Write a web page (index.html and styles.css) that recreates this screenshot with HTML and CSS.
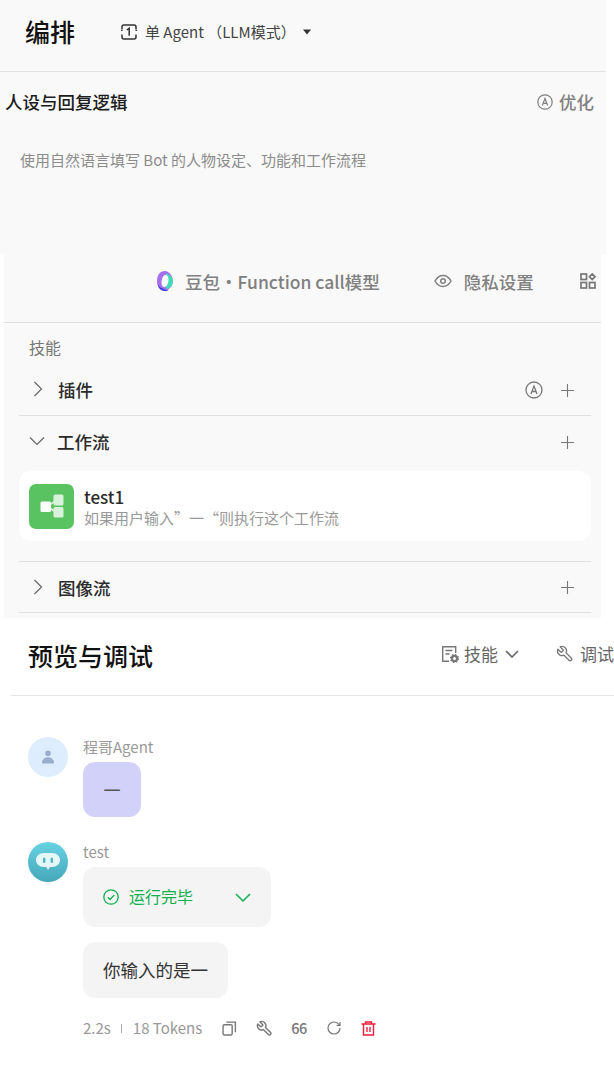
FILE: index.html
```html
<!DOCTYPE html>
<html lang="zh">
<head>
<meta charset="utf-8">
<title>编排</title>
<link rel="stylesheet" href="styles.css">
</head>
<body>
<section class="panel-top">
  <header class="arrange-head">
    <h1 class="arrange-title">编排</h1>
    <div class="mode">
      <svg class="mode-icon" viewBox="0 0 16 16" fill="none" stroke="#333" stroke-width="1.500"><path d="M1 5.500V3c0-1.100.9-2 2-2h10c1.100 0 2 .9 2 2v2.500M1 10.500V13c0 1.100.9 2 2 2h10c1.100 0 2-.9 2-2v-2.500"/><path d="M0 6.500h1.500M14.500 6.500H16" stroke-width="1"/><path d="M5.800 6 8.200 4.300v7.400"/></svg>
      <span>单 Agent （LLM模式）</span>
      <svg class="caret" viewBox="0 0 8 6"><path d="M0 .5h8L4 5.500z" fill="#333"/></svg>
    </div>
  </header>
  <div class="persona-head">
    <h2 class="persona-title">人设与回复逻辑</h2>
    <div class="optimize">
      <svg class="a-icon-sm" viewBox="0 0 16 16" fill="none" stroke="#808080" stroke-width="1.200"><circle cx="8" cy="8" r="7.200"/><path d="M5.300 11.500 8 4.500l2.700 7M6.200 9.300h3.600"/></svg>
      <span>优化</span>
    </div>
  </div>
  <p class="persona-hint">使用自然语言填写 Bot 的人物设定、功能和工作流程</p>
</section>

<section class="panel-skills">
  <div class="toolbar">
    <svg class="doubao" viewBox="0 0 20 22"><path d="M10 1c4 0 8 5.500 8 10s-4 9-8 10c-5 0-8-4-8-10S5 1 10 1z" fill="#a66ff0"/><path d="M11 3c4 2 7 5 7 8 0 4-3 7-7 8z" fill="#3fdcb8"/><path d="M2.500 14c1 4 4 7 8 7 2 0 3-1 3-1-4 0-9-2-11-6z" fill="#2a35e8"/><ellipse cx="10" cy="11" rx="3.400" ry="6.200" fill="#fff" transform="rotate(10 10 11)"/></svg>
    <span class="tool-text model">豆包·Function call模型</span>
    <svg class="eye" viewBox="0 0 18 14" fill="none" stroke="#808080" stroke-width="1.500"><path d="M1 7c2-3.600 4.800-5.500 8-5.500s6 1.900 8 5.500c-2 3.600-4.800 5.500-8 5.500S3 10.600 1 7z"/><circle cx="9" cy="7" r="2.300"/></svg>
    <span class="tool-text privacy">隐私设置</span>
    <svg class="grid-icon" viewBox="0 0 16 16" fill="none" stroke="#777" stroke-width="1.700"><rect x="1" y="1" width="5.500" height="5.500"/><rect x="1" y="9.500" width="5.500" height="5.500"/><rect x="9.500" y="9.500" width="5.500" height="5.500"/><path d="M12.200.9 15 3.700l-2.800 2.800-2.800-2.800z"/></svg>
  </div>
  <div class="skills">
    <div class="skills-label">技能</div>
    <div class="row row-plugin">
      <svg class="chev" viewBox="0 0 10 16" fill="none" stroke="#666" stroke-width="1.200"><path d="m1.500 1 7 7-7 7"/></svg>
      <span class="row-title">插件</span>
      <svg class="a-icon" viewBox="0 0 18 18" fill="none" stroke="#777" stroke-width="1.300"><circle cx="9" cy="9" r="8"/><path d="M6 13 9 5l3 8M7 10.500h4"/></svg>
      <svg class="plus" viewBox="0 0 13 13" stroke="#777" stroke-width="1.100"><path d="M6.500 0v13M0 6.500h13"/></svg>
    </div>
    <div class="row row-flow">
      <svg class="chev-down" viewBox="0 0 16 10" fill="none" stroke="#666" stroke-width="1.200"><path d="m1 1.500 7 7 7-7"/></svg>
      <span class="row-title">工作流</span>
      <svg class="plus" viewBox="0 0 13 13" stroke="#777" stroke-width="1.100"><path d="M6.500 0v13M0 6.500h13"/></svg>
    </div>
    <div class="flow-card">
      <div class="flow-logo">
        <svg viewBox="0 0 24 24" width="24" height="24"><path d="M8 12.500 16 6M8 12.500l8 6" stroke="#e6f6e7" stroke-width="1.600"/><rect x="0.500" y="7.500" width="10.500" height="10.500" rx="1.500" fill="#fff"/><rect x="13.500" y="0.500" width="10" height="11" rx="1.500" fill="#d9f2db"/><rect x="13.500" y="13" width="10" height="10.500" rx="1.500" fill="#d9f2db"/></svg>
      </div>
      <div class="flow-text">
        <div class="flow-name">test1</div>
        <div class="flow-desc">如果用户输入”一“则执行这个工作流</div>
      </div>
    </div>
    <div class="row row-image">
      <svg class="chev" viewBox="0 0 10 16" fill="none" stroke="#666" stroke-width="1.200"><path d="m1.500 1 7 7-7 7"/></svg>
      <span class="row-title">图像流</span>
      <svg class="plus" viewBox="0 0 13 13" stroke="#777" stroke-width="1.100"><path d="M6.500 0v13M0 6.500h13"/></svg>
    </div>
  </div>
</section>

<section class="panel-preview">
  <header class="preview-head">
    <h2 class="preview-title">预览与调试</h2>
    <div class="preview-tools">
      <svg class="tool-icon" viewBox="0 0 18 18" fill="none" stroke="#777" stroke-width="1.400"><path d="M8 16.300H1.700V1.700h13V8M4.500 5.500h7M4.500 9h4"/><circle cx="13.500" cy="13.500" r="2.600" fill="#fff" stroke-width="2.200"/><circle cx="13.500" cy="13.500" r="3.900" stroke-width="1.300" stroke-dasharray="1.500 1.560"/></svg>
      <span class="tool-label">技能</span>
      <svg class="tool-chev" viewBox="0 0 14 8" fill="none" stroke="#666" stroke-width="1.600"><path d="m1 1 6 6 6-6"/></svg>
      <svg class="tool-icon wrench" viewBox="0 0 24 24" fill="none" stroke="#777" stroke-width="1.800" stroke-linejoin="round"><g transform="matrix(-1 0 0 1 24 0)"><path d="M14.700 6.300a1 1 0 0 0 0 1.400l1.600 1.600a1 1 0 0 0 1.400 0l3.770-3.770a6 6 0 0 1-7.940 7.940l-6.910 6.910a2.120 2.120 0 0 1-3-3l6.910-6.910a6 6 0 0 1 7.940-7.940l-3.760 3.760z"/></g></svg>
      <span class="tool-label tool-label-debug">调试</span>
    </div>
  </header>
  <div class="chat">
    <div class="msg msg-user">
      <div class="avatar avatar-user">
        <svg viewBox="0 0 12 14" width="12" height="14"><circle cx="6" cy="3.200" r="2.800" fill="#9aafcc"/><path d="M1 13.500c-.8 0-1-.6-1-1.300C.3 9.500 2.800 7.200 6 7.200s5.700 2.300 6 5c0 .7-.2 1.300-1 1.300z" fill="#9aafcc"/></svg>
      </div>
      <div class="msg-body">
        <div class="msg-name">程哥Agent</div>
        <div class="bubble bubble-user">一</div>
      </div>
    </div>
    <div class="msg msg-bot">
      <div class="avatar avatar-bot">
        <svg viewBox="0 0 24 20" width="24" height="20"><path d="M7.500 1h9C20.500 1 24 4 24 8s-3.500 7-7.500 7H14l-2 3-1.700-3H7.500C3.500 15 0 12 0 8s3.500-7 7.500-7z" fill="#e4f6f8"/><rect x="7" y="5.500" width="2.400" height="5.500" rx="1.200" fill="#53b3c6"/><rect x="14.600" y="5.500" width="2.400" height="5.500" rx="1.200" fill="#53b3c6"/></svg>
      </div>
      <div class="msg-body">
        <div class="msg-name">test</div>
        <div class="bubble bubble-run">
          <svg class="check" viewBox="0 0 16 16" fill="none" stroke="#12b04e" stroke-width="1.300"><circle cx="8" cy="8" r="7.200"/><path d="m4.800 8.200 2.300 2.300 4.200-4.500"/></svg>
          <span class="run-text">运行完毕</span>
          <svg class="run-chev" viewBox="0 0 16 9" fill="none" stroke="#12b04e" stroke-width="1.500"><path d="m1 1 7 7 7-7"/></svg>
        </div>
        <div class="bubble bubble-answer">你输入的是一</div>
        <div class="meta">
          <span class="meta-text">2.2s</span>
          <span class="meta-sep"></span>
          <span class="meta-text">18 Tokens</span>
          <svg class="meta-icon copy" viewBox="0 0 14 14" fill="none" stroke="#777" stroke-width="1.300"><rect x="1" y="3.500" width="8.500" height="9.500" rx="1"/><path d="M4 1h8.500v9.500"/></svg>
          <svg class="meta-icon wrench-sm" viewBox="0 0 24 24" fill="none" stroke="#777" stroke-width="2" stroke-linejoin="round"><g transform="matrix(-1 0 0 1 24 0)"><path d="M14.700 6.300a1 1 0 0 0 0 1.400l1.600 1.600a1 1 0 0 0 1.400 0l3.770-3.770a6 6 0 0 1-7.940 7.940l-6.910 6.910a2.120 2.120 0 0 1-3-3l6.910-6.910a6 6 0 0 1 7.940-7.940l-3.760 3.760z"/></g></svg>
          <span class="meta-quote">66</span>
          <svg class="meta-icon refresh" viewBox="0 0 24 24" fill="none" stroke="#777" stroke-width="1.800"><path d="M21 12a9 9 0 1 1-9-9c2.520 0 4.930 1 6.740 2.740L21 8"/><path d="M21 3v5h-5"/></svg>
          <svg class="meta-icon trash" viewBox="0 0 14 15" fill="none" stroke="#f01f3d" stroke-width="1.400"><path d="M0 3h14M4 3V1h6v2M2 3v11h10V3M5.500 6v5M8.500 6v5"/></svg>
        </div>
      </div>
    </div>
  </div>
</section>
</body>
</html>
```
FILE: styles.css
```css
* { box-sizing: border-box; }
html, body { margin: 0; padding: 0; }
body {
  width: 614px;
  height: 1066px;
  overflow: hidden;
  background: #fff;
  font-family: "Noto Sans CJK SC", "Noto Sans", sans-serif;
  color: #1d1c23;
}
h1, h2, p { margin: 0; font-weight: 500; }

.panel-top { width: 606px; height: 254px; background: #f9f9f9; }
.arrange-head {
  height: 72px;
  border-bottom: 1px solid #e2e2e2;
  padding: 0 0 8px 25px;
  display: flex;
  align-items: center;
}
.arrange-title { font-size: 25px; line-height: 32px; color: #111; width: 96px; margin-top: -2px; }
.mode { display: flex; align-items: center; font-size: 15px; color: #444; }
.mode-icon { width: 16px; height: 16px; margin-right: 8px; }
.caret { width: 8px; height: 6px; margin-left: 7px; }
.persona-head {
  display: flex;
  justify-content: space-between;
  align-items: center;
  padding: 9px 12px 0 5px;
  height: 50px;
}
.persona-title { font-size: 17.500px; line-height: 24px; color: #1c1c1c; }
.optimize { display: flex; align-items: center; gap: 6px; font-size: 17.500px; font-weight: 500; color: #808080; }
.a-icon-sm { width: 16px; height: 16px; }
.persona-hint { padding: 27px 0 0 20px; font-size: 15px; line-height: 22px; font-weight: 400; color: #8c8c8c; }

.panel-skills { margin-left: 4px; width: 597px; height: 364px; background: #f9f9f9; }
.toolbar {
  height: 69px;
  border-bottom: 1px solid #e0e0e0;
  display: flex;
  align-items: center;
  padding: 0 6px 14px 151px;
}
.doubao { width: 20px; height: 22px; flex: none; }
.tool-text { font-size: 17.500px; font-weight: 500; color: #808080; white-space: nowrap; }
.model { margin-left: 10px; }
.eye { width: 18px; height: 14px; margin-left: 54px; flex: none; }
.privacy { margin-left: 12px; }
.grid-icon { width: 16px; height: 16px; margin-left: 46px; flex: none; }

.skills { padding: 0 10px 0 15px; }
.skills-label { padding: 12px 0 0 10px; font-size: 16px; line-height: 24px; color: #777; height: 41px; }
.row {
  display: flex;
  align-items: center;
  height: 51px;
  border-bottom: 1px solid #e0e0e0;
  padding: 1px 17px 0 14px;
}
.row-plugin { height: 52px; }
.row-flow { border-bottom: 0; height: 51px; }
.row-image { height: 52px; border-top: 1px solid #e0e0e0; margin-top: 20px; }
.chev { width: 10px; height: 16px; margin: 0 15px 2px 0; flex: none; }
.chev-down { width: 16px; height: 10px; margin: 0 12px 3px -4px; flex: none; }
.row-title { font-size: 17.500px; line-height: 24px; font-weight: 500; color: #2b2b2b; flex: 1; }
.a-icon { width: 18px; height: 18px; margin-right: 18px; }
.plus { width: 13px; height: 13px; }

.flow-card {
  height: 70px;
  background: #fff;
  border-radius: 12px;
  display: flex;
  align-items: center;
  padding: 0 10px;
  margin-top: 4px;
}
.flow-logo {
  width: 45px;
  height: 45px;
  border-radius: 7px;
  background: #59c361;
  display: flex;
  align-items: center;
  justify-content: center;
  flex: none;
}
.flow-text { margin-left: 10px; padding-top: 2px; }
.flow-name { font-size: 17px; line-height: 22px; font-weight: 500; color: #2a2a2a; }
.flow-desc { font-size: 15px; line-height: 20px; color: #999; }

.panel-preview { background: #fff; }
.preview-head {
  margin-left: 11px;
  height: 78px;
  border-bottom: 1px solid #e5e5e5;
  display: flex;
  align-items: center;
  padding: 0 0 2px 17px;
}
.preview-title { font-size: 25px; line-height: 34px; color: #111; white-space: nowrap; width: 413px; margin-top: -2px; }
.preview-tools { display: flex; align-items: center; white-space: nowrap; padding-bottom: 4px; }
.tool-icon { width: 18px; height: 18px; flex: none; }
.tool-label { font-size: 17px; line-height: 24px; color: #666; margin-left: 5px; }
.tool-label-debug { margin-left: 6px; }
.tool-chev { width: 14px; height: 8px; margin-left: 7px; flex: none; }
.wrench { margin-left: 37px; }

.chat { padding: 41px 0 0 28px; display: flex; flex-direction: column; gap: 25px; }
.msg { display: flex; gap: 15px; }
.avatar {
  width: 40px;
  height: 40px;
  border-radius: 50%;
  flex: none;
  display: flex;
  align-items: center;
  justify-content: center;
}
.avatar-user { background: #deedfe; }
.avatar-bot { background: linear-gradient(#66d3e2, #46a6ba); }
.msg-body { display: flex; flex-direction: column; align-items: flex-start; }
.msg-name { font-size: 15px; line-height: 20px; color: #999; height: 25px; }
.bubble { border-radius: 12px; font-size: 17px; }
.bubble-user {
  width: 58px;
  height: 55px;
  background: #d1d1fa;
  color: #555;
  display: flex;
  align-items: center;
  justify-content: center;
}
.bubble-run {
  width: 188px;
  height: 60px;
  background: #f4f4f4;
  display: flex;
  align-items: center;
  padding: 0 20px;
}
.check { width: 16px; height: 16px; flex: none; }
.run-text { font-size: 16px; line-height: 22px; color: #12b04e; margin-left: 10px; flex: 1; margin-top: -2px; }
.run-chev { width: 16px; height: 9px; flex: none; }
.bubble-answer {
  margin-top: 15px;
  height: 56px;
  width: 145px;
  padding: 0 20px;
  background: #f4f4f4;
  color: #333;
  font-size: 17.500px;
  line-height: 56px;
  white-space: nowrap;
}
.meta { margin-top: 20px; display: flex; align-items: center; height: 20px; }
.meta-text { font-size: 15px; line-height: 20px; color: #999; }
.meta-sep { width: 1px; height: 9px; background: #aaa; margin: 0 11px 0 10px; }
.meta-icon { width: 15px; height: 15px; flex: none; }
.copy { margin-left: 20px; }
.wrench-sm { width: 17px; height: 17px; margin-left: 19px; }
.meta-quote { font-size: 14.500px; line-height: 20px; color: #777; margin-left: 18px; width: 16px; font-weight: 500; letter-spacing: -0.500px; }
.refresh { width: 16px; height: 16px; margin-left: 19px; }
.trash { margin-left: 19px; }
```
